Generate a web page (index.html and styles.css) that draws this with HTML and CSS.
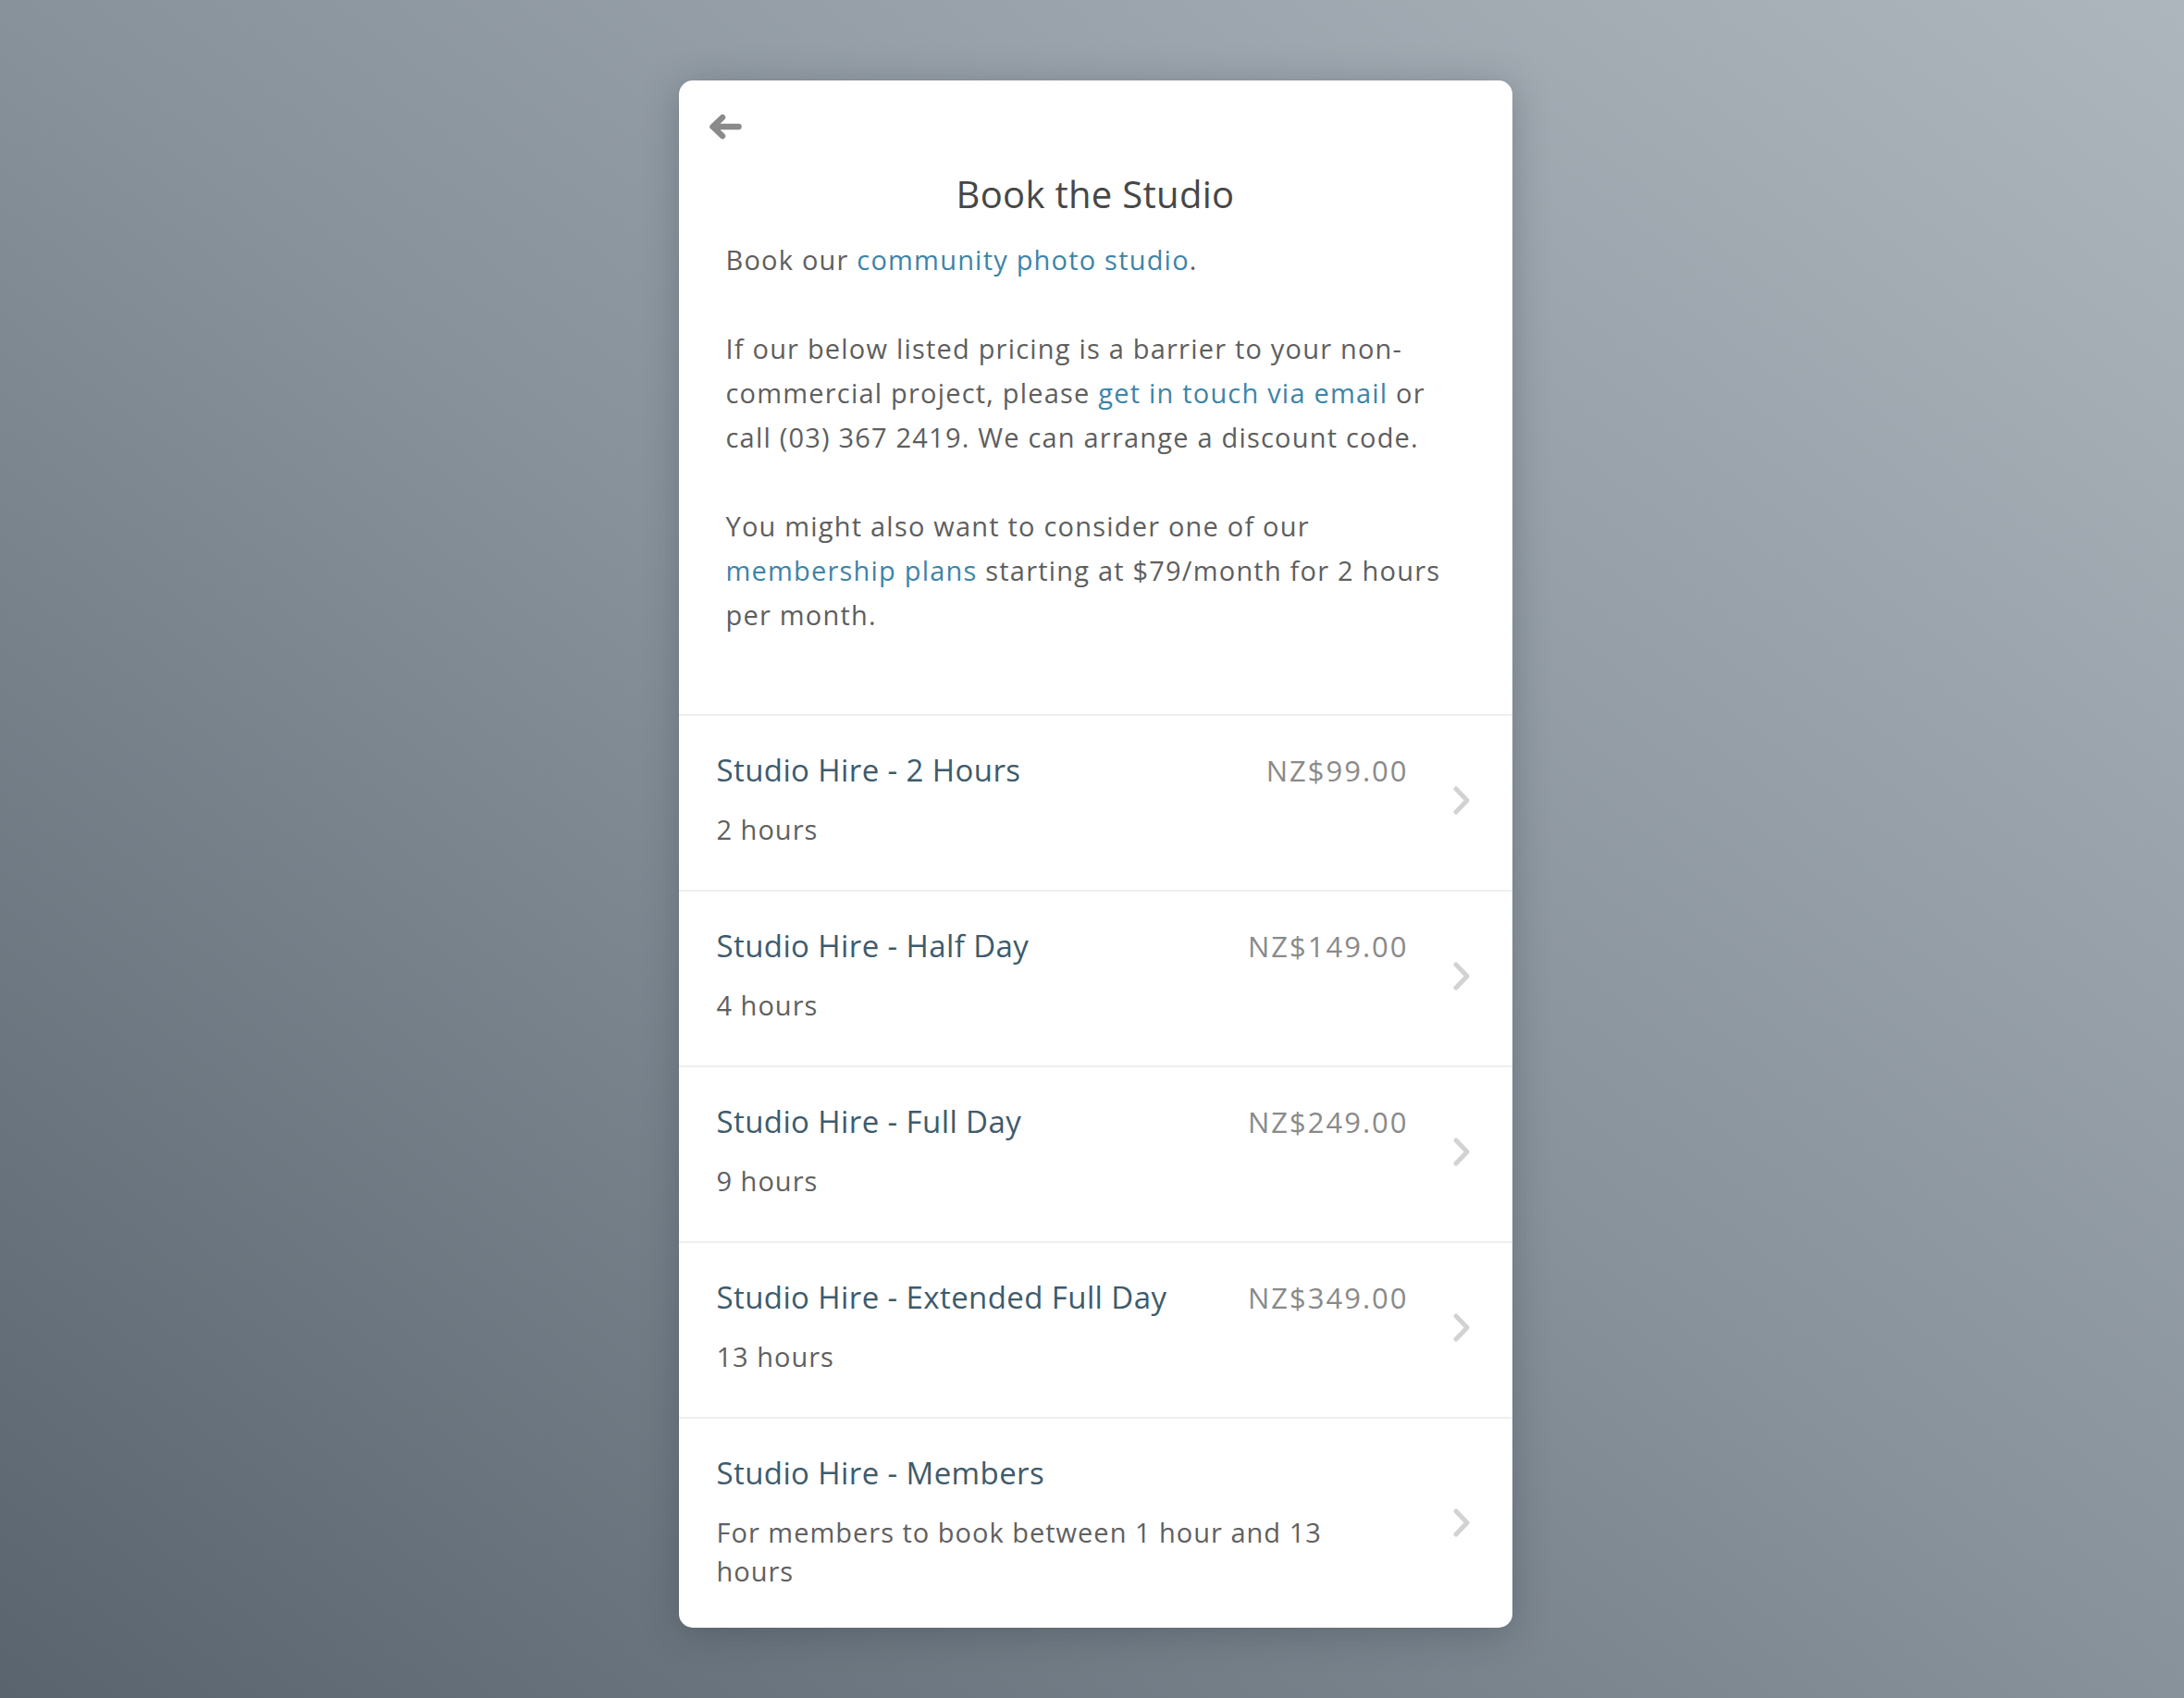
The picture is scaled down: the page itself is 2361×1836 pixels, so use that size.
FILE: index.html
```html
<!DOCTYPE html>
<html lang="en">
<head>
<meta charset="utf-8">
<title>Book the Studio</title>
<link rel="stylesheet" href="styles.css">
</head>
<body>
<div class="page">
  <div class="card">
    <div class="header">
      <a class="back" href="#" aria-label="Back">
        <svg width="36" height="28" viewBox="0 0 36 28"><path d="M32.5 14H5M15 4L4.5 14L15 24" fill="none" stroke="#8a8a8a" stroke-width="6.5" stroke-linecap="round" stroke-linejoin="round"/></svg>
      </a>
      <h1 class="title">Book the Studio</h1>
      <div class="intro">
        <p>Book our <a href="#">community photo studio</a>.</p>
        <p>If our below listed pricing is a barrier to your non-commercial project, please <a href="#">get in touch via email</a> or call (03) 367 2419. We can arrange a discount code.</p>
        <p>You might also want to consider one of our <a href="#">membership plans</a> starting at $79/month for 2 hours per month.</p>
      </div>
    </div>
    <ul class="list">
      <li class="row">
        <div class="row-body">
          <div class="row-head"><span class="row-title">Studio Hire - 2 Hours</span><span class="price">NZ$99.00</span></div>
          <div class="row-sub">2 hours</div>
        </div>
        <svg class="chev" width="18" height="31" viewBox="0 0 18 31"><path d="M3 3L15 15.5L3 28" fill="none" stroke="#d2d2d2" stroke-width="5" stroke-linecap="round" stroke-linejoin="round"/></svg>
      </li>
      <li class="row">
        <div class="row-body">
          <div class="row-head"><span class="row-title">Studio Hire - Half Day</span><span class="price">NZ$149.00</span></div>
          <div class="row-sub">4 hours</div>
        </div>
        <svg class="chev" width="18" height="31" viewBox="0 0 18 31"><path d="M3 3L15 15.5L3 28" fill="none" stroke="#d2d2d2" stroke-width="5" stroke-linecap="round" stroke-linejoin="round"/></svg>
      </li>
      <li class="row">
        <div class="row-body">
          <div class="row-head"><span class="row-title">Studio Hire - Full Day</span><span class="price">NZ$249.00</span></div>
          <div class="row-sub">9 hours</div>
        </div>
        <svg class="chev" width="18" height="31" viewBox="0 0 18 31"><path d="M3 3L15 15.5L3 28" fill="none" stroke="#d2d2d2" stroke-width="5" stroke-linecap="round" stroke-linejoin="round"/></svg>
      </li>
      <li class="row">
        <div class="row-body">
          <div class="row-head"><span class="row-title">Studio Hire - Extended Full Day</span><span class="price">NZ$349.00</span></div>
          <div class="row-sub">13 hours</div>
        </div>
        <svg class="chev" width="18" height="31" viewBox="0 0 18 31"><path d="M3 3L15 15.5L3 28" fill="none" stroke="#d2d2d2" stroke-width="5" stroke-linecap="round" stroke-linejoin="round"/></svg>
      </li>
      <li class="row row-last">
        <div class="row-body">
          <div class="row-head"><span class="row-title">Studio Hire - Members</span></div>
          <div class="row-sub row-sub-narrow">For members to book between 1 hour and 13 hours</div>
        </div>
        <svg class="chev" width="18" height="31" viewBox="0 0 18 31"><path d="M3 3L15 15.5L3 28" fill="none" stroke="#d2d2d2" stroke-width="5" stroke-linecap="round" stroke-linejoin="round"/></svg>
      </li>
    </ul>
  </div>
</div>
</body>
</html>
```
FILE: styles.css
```css
html, body {
  margin: 0;
  padding: 0;
}
body {
  font-family: "Open Sans", "Liberation Sans", sans-serif;
  color: #5e5e5e;
  background: linear-gradient(to top right, #5a646e 0%, #88929b 50%, #aeb6bd 100%);
  min-height: 1836px;
}
.page {
  display: flex;
  justify-content: center;
  padding: 87px 0 60px 7px;
}
.card {
  width: 901px;
  background: #fff;
  border-radius: 15px;
  box-shadow: 0 6px 40px rgba(30, 40, 50, 0.28);
  overflow: hidden;
}
.header {
  padding: 36px 32px 83px 32px;
}
.back {
  display: block;
  width: 36px;
  height: 28px;
}
.back svg {
  display: block;
}
.title {
  margin: 35px 0 0;
  font-size: 40px;
  line-height: 48px;
  font-weight: 400;
  letter-spacing: 0.3px;
  color: #474747;
  text-align: center;
}
.intro {
  padding: 0 27px 0 19px;
  margin-top: 23px;
}
.intro p {
  margin: 0 0 48px;
  font-size: 29px;
  line-height: 48px;
  letter-spacing: 1.2px;
  color: #5e5e5e;
}
.intro p:last-child {
  margin-bottom: 0;
}
.intro a {
  color: #3d84a8;
  text-decoration: none;
}
.list {
  list-style: none;
  margin: 0;
  padding: 0;
}
.row {
  display: flex;
  align-items: center;
  border-top: 2px solid #efefef;
  padding: 39px 46px 44px 41px;
}
.row-last {
  padding-bottom: 40px;
}
.row-body {
  flex: 1;
  min-width: 0;
}
.row-head {
  display: flex;
  justify-content: space-between;
  align-items: baseline;
}
.row-title {
  font-size: 33px;
  line-height: 40px;
  letter-spacing: 0.4px;
  color: #3e5b6c;
}
.price {
  font-size: 31px;
  line-height: 40px;
  color: #8a8a8a;
  letter-spacing: 2px;
}
.row-sub {
  margin-top: 23px;
  font-size: 29px;
  line-height: 42px;
  letter-spacing: 1px;
  color: #606060;
}
.row-sub-narrow {
  max-width: 690px;
}
.chev {
  display: block;
  flex: none;
  margin-left: 48px;
}
```
